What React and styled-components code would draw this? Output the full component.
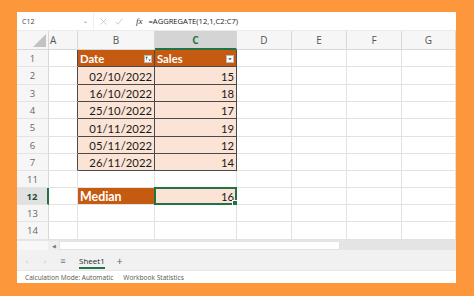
import React from 'react';
import styled, { createGlobalStyle, css } from 'styled-components';

const GlobalStyle = createGlobalStyle`
  html, body { margin: 0; padding: 0; }
  body { width: 474px; height: 296px; overflow: hidden; background: #fd973b; }
`;

const GREEN = '#217346';
const BROWN = '#c55a11';
const PEACH = '#fbe4d5';
const DARK = '#4a4a4a';
const GRID = '#e2e2e2';

const Frame = styled.div`
  width: 474px;
  height: 296px;
  box-sizing: border-box;
  padding: 12px 18px 13px 17px;
  background: #fd973b;
`;

const Window = styled.div`
  height: 100%;
  background: #fff;
  display: flex;
  flex-direction: column;
  font-family: "Open Sans", "Noto Sans", sans-serif;
  overflow: hidden;
`;

// formula bar
const FormulaBar = styled.div`
  height: 19px;
  flex: none;
  display: flex;
  align-items: center;
  border-bottom: 1px solid #ececec;
  box-sizing: border-box;
`;

const NameBox = styled.div`
  width: 76px;
  height: 100%;
  display: flex;
  align-items: center;
  justify-content: space-between;
  padding: 0 5px 0 5px;
  box-sizing: border-box;
  font-size: 7px;
  color: #444;
`;

const Caret = styled.span`
  font-size: 6px;
  color: #777;
`;

const BarIcons = styled.div`
  display: flex;
  align-items: center;
  gap: 8px;
  padding-left: 6px;
  height: 100%;
  border-left: 1px solid #f0f0f0;
`;

const Fx = styled.span`
  font-family: "Liberation Serif", serif;
  font-style: italic;
  font-size: 9px;
  color: #333;
  margin-left: 5px;
`;

const Formula = styled.div`
  margin-left: 6px;
  font-size: 7.6px;
  color: #222;
  white-space: nowrap;
`;

// sheet grid
const Sheet = styled.div`
  display: grid;
  grid-template-columns: 32px 29px 77px 82px 55px 55px 55px 54px;
  grid-template-rows: 19px 17px 18px 17px 17px 18px 17px 17px 17px 17px 17px 18px;
  flex: none;
`;

const Corner = styled.div`
  background: #f6f6f6;
  border-right: 1px solid #d8d8d8;
  border-bottom: 1px solid #d8d8d8;
  box-sizing: border-box;
  position: relative;
  &::after {
    content: '';
    position: absolute;
    right: 2px;
    bottom: 2px;
    border-style: solid;
    border-width: 0 0 13px 13px;
    border-color: transparent transparent #c2c2c2 transparent;
  }
`;

const ColHead = styled.div`
  background: ${(p) => (p.$sel ? '#d4d4d4' : '#f6f6f6')};
  color: ${(p) => (p.$sel ? GREEN : '#555')};
  font-weight: ${(p) => (p.$sel ? 700 : 400)};
  font-size: 10px;
  display: flex;
  align-items: center;
  justify-content: ${(p) => (p.$left ? 'flex-start' : 'center')};
  padding-left: ${(p) => (p.$left ? '1px' : '0')};
  border-right: 1px solid #d8d8d8;
  border-bottom: ${(p) => (p.$sel ? `2px solid ${GREEN}` : '1px solid #d8d8d8')};
  box-sizing: border-box;
`;

const RowHead = styled.div`
  background: ${(p) => (p.$sel ? '#e1e1e1' : '#f6f6f6')};
  color: ${(p) => (p.$sel ? '#1e5234' : '#666')};
  font-weight: ${(p) => (p.$sel ? 700 : 400)};
  font-size: 9.5px;
  display: flex;
  align-items: center;
  justify-content: center;
  border-right: ${(p) => (p.$sel ? `2px solid ${GREEN}` : '1px solid #d8d8d8')};
  border-bottom: 1px solid #e4e4e4;
  box-sizing: border-box;
`;

const kinds = {
  head: css`
    background: ${BROWN};
    color: #fff;
    font-weight: 700;
  `,
  data: css`
    background: ${PEACH};
    color: #1a1a1a;
  `,
  label: css`
    background: ${BROWN};
    color: #fff;
    font-weight: 700;
    font-size: 12.4px;
  `,
  plain: css`
    background: #fff;
  `,
};

const Cell = styled.div`
  position: relative;
  box-sizing: border-box;
  display: flex;
  align-items: center;
  justify-content: ${(p) => (p.$right ? 'flex-end' : 'flex-start')};
  padding: 1px 2px 0 2px;
  font-family: Lato, "Liberation Sans", sans-serif;
  font-size: 11.3px;
  white-space: nowrap;
  border-right: 1px solid ${(p) => (p.$rb ? DARK : GRID)};
  border-bottom: 1px solid ${(p) => (p.$bb ? DARK : GRID)};
  ${(p) => kinds[p.$kind || 'plain']}
`;

const FilterBtn = styled.span`
  margin-left: auto;
  width: 8px;
  height: 8px;
  background: #fff;
  border: 1px solid #b8b8b8;
  box-sizing: border-box;
  display: flex;
  align-items: center;
  justify-content: center;
`;

const Selection = styled.div`
  position: absolute;
  left: -1px;
  top: -1px;
  right: -1px;
  bottom: -1px;
  border: 2px solid ${GREEN};
  pointer-events: none;
  &::after {
    content: '';
    position: absolute;
    right: -4px;
    bottom: -4px;
    width: 5px;
    height: 5px;
    background: ${GREEN};
    border: 1px solid #fff;
  }
`;

// bottom bars
const ScrollRow = styled.div`
  height: 10px;
  flex: none;
  display: flex;
  align-items: stretch;
  background: #f7f7f7;
  border-top: 1px solid #e6e6e6;
  box-sizing: border-box;
`;

const ScrollArrow = styled.div`
  width: 11px;
  margin-left: 31px;
  display: flex;
  align-items: center;
  justify-content: center;
  font-size: 5px;
  color: #777;
  background: #efefef;
`;

const Thumb = styled.div`
  width: 281px;
  background: #fff;
  border: 1px solid #e2e2e2;
  box-sizing: border-box;
`;

const Track = styled.div`
  flex: 1;
  background: #e4e4e4;
`;

const TabBar = styled.div`
  height: 20px;
  flex: none;
  display: flex;
  align-items: center;
  background: #f1f1f1;
  padding-left: 1px;
  font-size: 8px;
  color: #bbb;
`;

const NavGlyph = styled.span`
  width: 18px;
  text-align: center;
  color: ${(p) => p.$c || '#c4c4c4'};
  font-size: ${(p) => p.$size || '8px'};
`;

const Tab = styled.div`
  height: 100%;
  display: flex;
  align-items: center;
  margin: 0 6px 0 7px;
  color: #2b2b2b;
  font-size: 8px;
  position: relative;
  &::after {
    content: '';
    position: absolute;
    left: 0;
    right: 0;
    bottom: 1px;
    height: 2px;
    background: ${GREEN};
  }
`;

const StatusBar = styled.div`
  flex: 1;
  display: flex;
  align-items: center;
  gap: 10px;
  padding-left: 8px;
  font-size: 6.6px;
  color: #555;
  background: #fff;
  border-top: 1px solid #e8e8e8;
`;

function Icon({ kind }) {
  if (kind === 'x') {
    return (
      <svg width="7" height="7" viewBox="0 0 7 7">
        <path d="M0.5 0.5 L6.5 6.5 M6.5 0.5 L0.5 6.5" stroke="#c6c6c6" strokeWidth="0.9" fill="none" />
      </svg>
    );
  }
  if (kind === 'check') {
    return (
      <svg width="8" height="7" viewBox="0 0 8 7">
        <path d="M0.5 3.8 L2.8 6.2 L7.5 0.6" stroke="#c6c6c6" strokeWidth="0.9" fill="none" />
      </svg>
    );
  }
  if (kind === 'filter') {
    return (
      <svg width="6" height="6" viewBox="0 0 6 6">
        <path d="M0.3 0.8 L3 0.8 L1.9 2.4 L1.9 4.2 L1.4 4.6 L1.4 2.4 Z" fill="#555" />
        <path d="M3.4 3.4 L5.8 3.4 L4.6 5.2 Z" fill="#555" />
      </svg>
    );
  }
  return (
    <svg width="6" height="6" viewBox="0 0 6 6">
      <path d="M1.2 2.2 L4.8 2.2 L3 4.2 Z" fill="#555" />
    </svg>
  );
}

const cols = ['A', 'B', 'C', 'D', 'E', 'F', 'G'];

const rows = [
  { n: '1', b: 'Date', c: 'Sales', kind: 'head' },
  { n: '2', b: '02/10/2022', c: '15', kind: 'data' },
  { n: '3', b: '16/10/2022', c: '18', kind: 'data' },
  { n: '4', b: '25/10/2022', c: '17', kind: 'data' },
  { n: '5', b: '01/11/2022', c: '19', kind: 'data' },
  { n: '6', b: '05/11/2022', c: '12', kind: 'data' },
  { n: '7', b: '26/11/2022', c: '14', kind: 'data' },
  { n: '11' },
  { n: '12', b: 'Median', c: '16', kind: 'median' },
  { n: '13' },
  { n: '14' },
];

function SheetRow({ row }) {
  const inTable = row.kind === 'head' || row.kind === 'data';
  const median = row.kind === 'median';
  const cells = [];

  cells.push(<Cell key="a" $rb={inTable} />);

  if (row.kind === 'head') {
    cells.push(
      <Cell key="b" $kind="head" $rb $bb>
        {row.b}
        <FilterBtn><Icon kind="filter" /></FilterBtn>
      </Cell>
    );
    cells.push(
      <Cell key="c" $kind="head" $rb $bb>
        {row.c}
        <FilterBtn><Icon kind="drop" /></FilterBtn>
      </Cell>
    );
  } else if (row.kind === 'data') {
    cells.push(<Cell key="b" $kind="data" $right $rb $bb>{row.b}</Cell>);
    cells.push(<Cell key="c" $kind="data" $right $rb $bb>{row.c}</Cell>);
  } else if (median) {
    cells.push(<Cell key="b" $kind="label">{row.b}</Cell>);
    cells.push(
      <Cell key="c" $kind="data" $right>
        {row.c}
        <Selection />
      </Cell>
    );
  } else {
    cells.push(<Cell key="b" />);
    cells.push(<Cell key="c" />);
  }

  ['d', 'e', 'f', 'g'].forEach((k) => cells.push(<Cell key={k} />));

  return (
    <>
      <RowHead $sel={median}>{row.n}</RowHead>
      {cells}
    </>
  );
}

export default function App() {
  return (
    <>
      <GlobalStyle />
      <Frame>
        <Window>
          <FormulaBar>
            <NameBox>
              <span>C12</span>
              <Caret>⌄</Caret>
            </NameBox>
            <BarIcons>
              <Icon kind="x" />
              <Icon kind="check" />
              <Fx>fx</Fx>
            </BarIcons>
            <Formula>=AGGREGATE(12,1,C2:C7)</Formula>
          </FormulaBar>

          <Sheet>
            <Corner />
            {cols.map((c) => (
              <ColHead key={c} $sel={c === 'C'} $left={c === 'A'}>{c}</ColHead>
            ))}
            {rows.map((r) => (
              <SheetRow key={r.n} row={r} />
            ))}
          </Sheet>

          <ScrollRow>
            <ScrollArrow>◀</ScrollArrow>
            <Thumb />
            <Track />
          </ScrollRow>

          <TabBar>
            <NavGlyph>‹</NavGlyph>
            <NavGlyph>›</NavGlyph>
            <NavGlyph $c="#777" $size="9px">≡</NavGlyph>
            <Tab>Sheet1</Tab>
            <NavGlyph $c="#666" $size="11px">+</NavGlyph>
          </TabBar>

          <StatusBar>
            <span>Calculation Mode: Automatic</span>
            <span>Workbook Statistics</span>
          </StatusBar>
        </Window>
      </Frame>
    </>
  );
}
